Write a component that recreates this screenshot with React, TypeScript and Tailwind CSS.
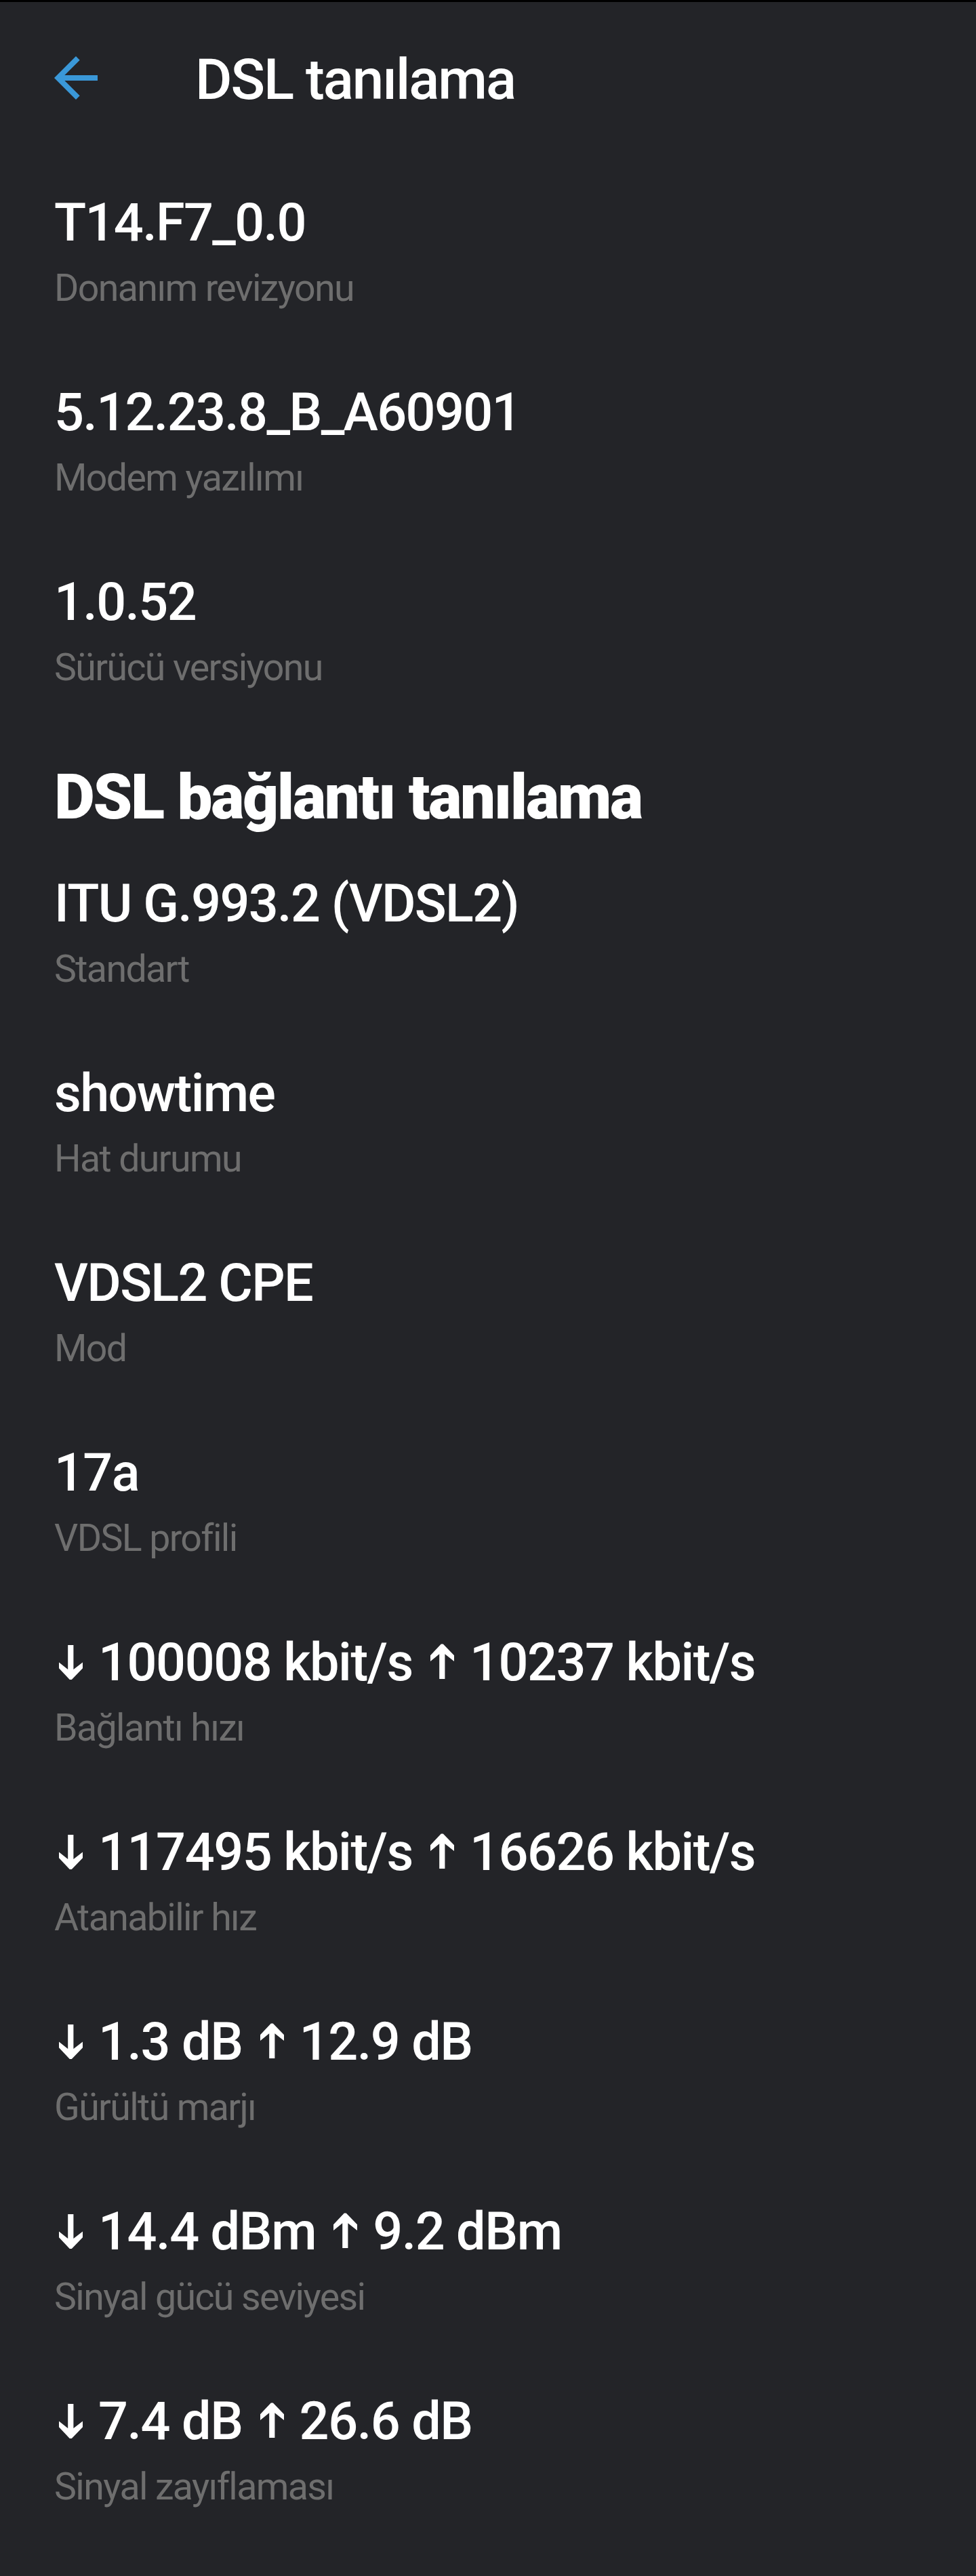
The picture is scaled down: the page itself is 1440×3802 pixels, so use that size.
import { FC } from "react";

const items = [
  { value: "T14.F7_0.0", label: "Donanım revizyonu" },
  { value: "5.12.23.8_B_A60901", label: "Modem yazılımı" },
  { value: "1.0.52", label: "Sürücü versiyonu" },
];

const lineItems = [
  { value: "ITU G.993.2 (VDSL2)", label: "Standart" },
  { value: "showtime", label: "Hat durumu" },
  { value: "VDSL2 CPE", label: "Mod" },
  { value: "17a", label: "VDSL profili" },
  { down: "100008 kbit/s", up: "10237 kbit/s", label: "Bağlantı hızı" },
  { down: "117495 kbit/s", up: "16626 kbit/s", label: "Atanabilir hız" },
  { down: "1.3 dB", up: "12.9 dB", label: "Gürültü marjı" },
  { down: "14.4 dBm", up: "9.2 dBm", label: "Sinyal gücü seviyesi" },
  { down: "7.4 dB", up: "26.6 dB", label: "Sinyal zayıflaması" },
];

type ItemProps = {
  value?: string;
  down?: string;
  up?: string;
  label: string;
};

const DownArrow: FC = () => (
  <svg className="mr-[23px] ml-[7px] inline-block h-[52px] w-[35px] align-baseline" viewBox="0 0 35 52" fill="white">
    <path d="M13.2 0h8.2v36L35 25.5v8.8L18.8 51h-3L0 34.3v-8.8L13.2 36z" />
  </svg>
);

const UpArrow: FC = () => (
  <svg className="mr-[23px] ml-[26px] inline-block h-[54px] w-[35px] align-baseline" viewBox="0 0 35 54" fill="white">
    <path d="M13.2 52h8.2V15.2L35 26v-8.8L18.8 0.5h-3L0 17.2V26l13.2-10.8z" />
  </svg>
);

const Item: FC<ItemProps> = ({ value, down, up, label }) => (
  <div className="h-[280px]">
    {value ? (
      <p className="text-[77.4px] leading-[100px] font-medium tracking-[-0.0215em] text-white">{value}</p>
    ) : (
      <p className="text-[77.4px] leading-[100px] font-medium tracking-[-0.0185em] text-white">
        <DownArrow />
        {down}
        <UpArrow />
        {up}
      </p>
    )}
    <p className="text-[55.5px] leading-[94px] font-normal tracking-[-0.0295em] text-[#6e6e6e]">{label}</p>
  </div>
);

const App: FC = () => (
  <div className="h-[3802px] overflow-hidden border-t-3 border-black bg-[#232428] px-20 font-['Roboto',sans-serif] whitespace-nowrap">
    <header className="flex h-[229px] items-center">
      <svg className="mt-[-5px] h-16 w-16" viewBox="0 0 64 64" fill="#3a98d8">
        <path d="M64 28v8H15.3l22.4 22.3L32 64 0 32 32 0l5.7 5.7L15.3 28z" />
      </svg>
      <h1 className="ml-[144px] text-[83.5px] font-medium tracking-[-0.024em] text-white">DSL tanılama</h1>
    </header>
    <div className="pt-[47px]">
      {items.map((item) => (
        <Item key={item.label} {...item} />
      ))}
    </div>
    <h2 className="h-[165px] text-[92.4px] leading-[116px] font-black tracking-[-0.025em] text-white">
      DSL bağlantı tanılama
    </h2>
    {lineItems.map((item) => (
      <Item key={item.label} {...item} />
    ))}
  </div>
);

export default App;
